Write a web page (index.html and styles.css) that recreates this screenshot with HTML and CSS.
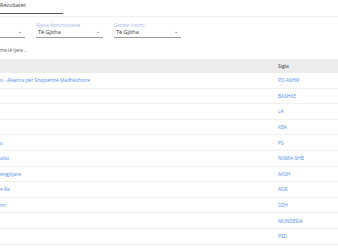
FILE: index.html
```html
<!DOCTYPE html>
<html lang="sq">
<head>
  <meta charset="UTF-8">
  <meta name="viewport" content="width=device-width, initial-scale=1.0">
  <title>Rezultatet</title>
  <link rel="stylesheet" href="styles.css">
</head>
<body>
  <div class="page">
    <div class="tabs">
      <span class="tab active">Rezultatet</span>
    </div>

    <div class="filters">
      <div class="select first">
        <label></label>
        <div class="value"><span></span><span class="chev">&#8964;</span></div>
      </div>
      <div class="select">
        <label>Njësia Administrative</label>
        <div class="value"><span>Të Gjitha</span><span class="chev">&#8964;</span></div>
      </div>
      <div class="select">
        <label>Gender Votimi</label>
        <div class="value"><span>Të Gjitha</span><span class="chev">&#8964;</span></div>
      </div>
    </div>

    <div class="more">me të tjera <span class="chev">&#8964;</span></div>

    <table class="results">
      <thead>
        <tr>
          <th class="name"></th>
          <th>Sigla</th>
        </tr>
      </thead>
      <tbody>
        <tr><td class="name"><a href="#">o - Aleanca për Shqipërinë Madhështore</a></td><td><a href="#">PD-ASHM</a></td></tr>
        <tr><td class="name"></td><td><a href="#">BASHKE</a></td></tr>
        <tr><td class="name"></td><td><a href="#">LA</a></td></tr>
        <tr><td class="name"></td><td><a href="#">KEA</a></td></tr>
        <tr><td class="name"><a href="#">o</a></td><td><a href="#">PS</a></td></tr>
        <tr><td class="name"><a href="#">alist</a></td><td><a href="#">NISMA-SHB</a></td></tr>
        <tr><td class="name"><a href="#">ëngjitjare</a></td><td><a href="#">AKSH</a></td></tr>
        <tr><td class="name"><a href="#">e Re</a></td><td><a href="#">ADR</a></td></tr>
        <tr><td class="name"><a href="#">im</a></td><td><a href="#">DZH</a></td></tr>
        <tr><td class="name"></td><td><a href="#">MUNDESIA</a></td></tr>
        <tr><td class="name"></td><td><a href="#">PSD</a></td></tr>
      </tbody>
    </table>
  </div>
</body>
</html>
```

FILE: styles.css
```css
body {
  margin: 0;
  background-color: #fff;
  font-family: 'Open Sans', sans-serif;
  color: #333;
  overflow: hidden;
}
.page {
  width: 338px;
}
.tabs {
  height: 17px;
  border-bottom: 1px solid #f0f0f0;
  box-sizing: border-box;
}
.tab {
  display: block;
  width: 63px;
  height: 14px;
  box-sizing: border-box;
  padding-top: 2px;
  line-height: 7px;
  font-size: 5.5px;
  color: #333;
  border-bottom: 1.5px solid #555;
}
.filters {
  display: flex;
  gap: 11px;
  margin-left: -42px;
  margin-top: 3px;
}
.select {
  width: 67px;
}
.select label {
  display: block;
  height: 5px;
  padding-top: 3px;
  line-height: 5px;
  font-size: 4.5px;
  color: #a9b4e2;
}
.value {
  display: flex;
  justify-content: space-between;
  align-items: center;
  height: 9px;
  padding: 0 3px 0 2px;
  font-size: 5.5px;
  line-height: 7px;
  color: #333;
  border-bottom: 1px solid #9a9a9a;
}
.chev {
  font-size: 5px;
  line-height: 1;
  margin-top: -2px;
}
.more {
  margin-top: 9px;
  height: 12px;
  line-height: 7px;
  font-size: 4.5px;
  color: #555;
}
.more .chev {
  font-size: 4px;
  color: #888;
}
.results {
  width: 100%;
  border-collapse: collapse;
  font-size: 4.8px;
  line-height: 6px;
}
.results th {
  height: 14px;
  padding: 0;
  background-color: #ececec;
  text-align: left;
  font-weight: normal;
  color: #333;
  font-size: 5px;
}
.results td {
  height: 14.6px;
  padding: 0;
  border-bottom: 1px solid #f0f0f0;
}
.results .name {
  width: 278px;
}
.results a {
  color: #4d8ef0;
  text-decoration: none;
}
```
